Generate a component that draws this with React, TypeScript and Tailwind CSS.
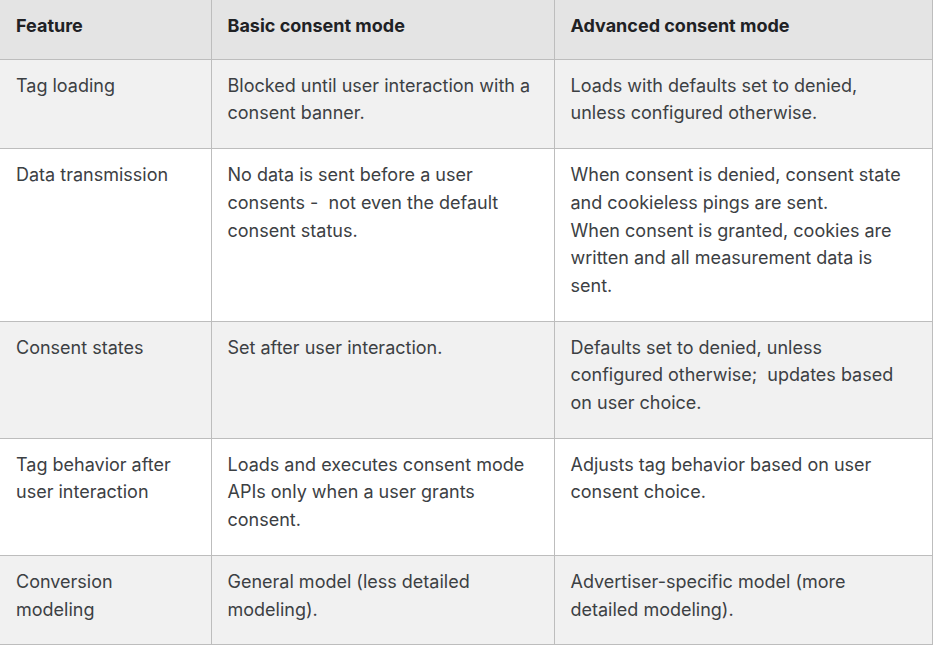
const rows: { feature: string; basic: string; advanced: React.ReactNode; shaded: boolean }[] = [
  {
    feature: "Tag loading",
    basic: "Blocked until user interaction with a consent banner.",
    advanced: "Loads with defaults set to denied, unless configured otherwise.",
    shaded: true,
  },
  {
    feature: "Data transmission",
    basic: "No data is sent before a user consents -  not even the default consent status.",
    advanced: (
      <>
        When consent is denied, consent state and cookieless pings are sent.
        <br />
        When consent is granted, cookies are written and all measurement data is sent.
      </>
    ),
    shaded: false,
  },
  {
    feature: "Consent states",
    basic: "Set after user interaction.",
    advanced: "Defaults set to denied, unless configured otherwise;  updates based on user choice.",
    shaded: true,
  },
  {
    feature: "Tag behavior after user interaction",
    basic: "Loads and executes consent mode APIs only when a user grants consent.",
    advanced: "Adjusts tag behavior based on user consent choice.",
    shaded: false,
  },
  {
    feature: "Conversion modeling",
    basic: "General model (less detailed modeling).",
    advanced: "Advertiser-specific model (more detailed modeling).",
    shaded: true,
  },
];

const th = "border border-t-0 border-[#bdbdbd] px-4 pt-[12px] pb-[19px] align-top font-bold text-[#202124]";
const td = "border border-[#bdbdbd] px-4 pt-[12px] pb-[21px] align-top whitespace-pre-wrap";

export default function App() {
  return (
    <div className="w-[934px] h-[648px] bg-white font-['Inter',sans-serif] text-[18px] leading-[27.7px] text-[#3c4043]">
      <table className="w-[932px] table-fixed border-collapse">
        <colgroup>
          <col className="w-[211px]" />
          <col className="w-[343px]" />
          <col className="w-[378px]" />
        </colgroup>
        <thead>
          <tr className="bg-[#e4e4e4] text-left">
            <th className={`${th} border-l-0`}>Feature</th>
            <th className={th}>Basic consent mode</th>
            <th className={th}>Advanced consent mode</th>
          </tr>
        </thead>
        <tbody>
          {rows.map((r) => (
            <tr key={r.feature} className={r.shaded ? "bg-[#f1f1f1]" : "bg-white"}>
              <td className={`${td} border-l-0`}>{r.feature}</td>
              <td className={td}>{r.basic}</td>
              <td className={td}>{r.advanced}</td>
            </tr>
          ))}
        </tbody>
      </table>
    </div>
  );
}
